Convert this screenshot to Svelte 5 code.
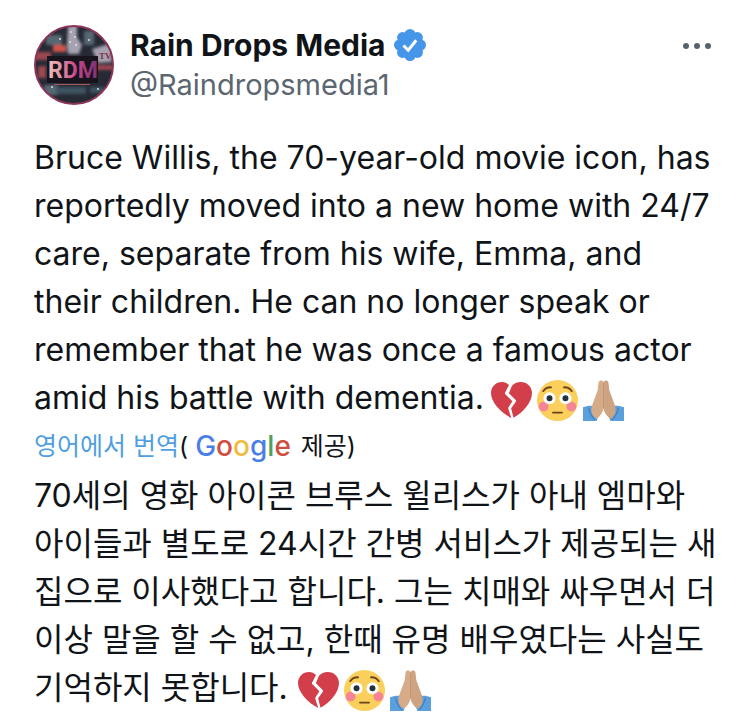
<script>
  const author = { name: 'Rain Drops Media', handle: '@Raindropsmedia1' };

  const original =
    'Bruce Willis, the 70-year-old movie icon, has reportedly moved into a new home with 24/7 care, separate from his wife, Emma, and their children. He can no longer speak or remember that he was once a famous actor amid his battle with dementia.';

  const translated =
    '70세의 영화 아이콘 브루스 윌리스가 아내 엠마와 아이들과 별도로 24시간 간병 서비스가 제공되는 새 집으로 이사했다고 합니다. 그는 치매와 싸우면서 더 이상 말을 할 수 없고, 한때 유명 배우였다는 사실도 기억하지 못합니다.';
</script>

{#snippet emojis()}
  <span class="emojis">
    <svg class="emoji" viewBox="0 0 36 36" role="img" aria-label="broken heart">
      <path
        fill="#d23f4b"
        d="M15.800 4.400C14 2.700 12 1.700 9.700 1.700 4.300 1.700 0 6 0 11.400c0 8.200 8.600 17.300 17.800 22l-2.600-8.200c-.1-.5 0-.9.2-1.300l3.400-5.200-6.200-6.200c-.4-.4-.5-1-.2-1.500z"
      />
      <path
        fill="#d23f4b"
        d="M18.300 5.200C20.100 3 23 1.700 26.100 1.700 31.600 1.700 36 6 36 11.400c0 8.200-7.600 17-16.200 21.800l-2-7.800c-.1-.4 0-.8.2-1.100l3.800-5.300c.3-.5.3-1.100-.1-1.500l-6-5.800z"
      />
    </svg>
    <svg class="emoji" viewBox="0 0 36 36" role="img" aria-label="flushed face">
      <circle cx="18" cy="18" r="18" fill="#fbcf5c" />
      <circle cx="5.800" cy="23.300" r="4.300" fill="#f58596" />
      <circle cx="30.200" cy="23.300" r="4.300" fill="#f58596" />
      <circle cx="11" cy="16" r="5.300" fill="#fff" />
      <circle cx="25" cy="16" r="5.300" fill="#fff" />
      <circle cx="11" cy="16" r="2.600" fill="#25303c" />
      <circle cx="25" cy="16" r="2.600" fill="#25303c" />
      <path
        fill="none"
        stroke="#69451c"
        stroke-width="1.600"
        stroke-linecap="round"
        d="M5.400 9.800C7 7.500 9.500 6.300 12.400 6.400M30.600 9.800C29 7.500 26.500 6.300 23.600 6.400M14 28.600h8"
      />
    </svg>
    <svg class="emoji" viewBox="0 0 36 36" role="img" aria-label="folded hands">
      <path
        fill="#5b9fdc"
        d="M0 24c3-1.400 6.500-1.800 8.500-1.200L13 33l-1 3H0zM36 24c-3-1.400-6.500-1.800-8.500-1.200L23 33l1 3h12z"
      />
      <path fill="none" stroke="#3f7fbd" d="M5 24.500c.5 3.500 2.500 7.500 5.500 10.500M31 24.500c-.5 3.500-2.500 7.500-5.500 10.500" />
      <path
        fill="#d5ab88"
        d="M17.900 2C17.500.2 14.300-.2 13.700 2L12.900 9 8.100 22c-.4 1-.6 2-.7 3l.1 3.500c1 2.800 2.700 4.800 4.700 5.500 2.600-2.400 4.900-4.800 5.700-8.300z"
      />
      <path
        fill="#cda381"
        d="M18.100 2c.4-1.800 3.600-2.200 4.200 0L23.100 9l4.800 13c.4 1 .6 2 .7 3l-.1 3.500c-1 2.800-2.700 4.800-4.700 5.500-2.600-2.400-4.900-4.800-5.700-8.300z"
      />
      <path fill="none" stroke="#b78a69" stroke-width=".7" d="M18 2v23" />
      <path fill="#fff" d="M18 26.500c.8 3.500 2.600 6 4.800 8V36h-9.600v-1.500c2.200-2 4-4.500 4.800-8z" />
    </svg>
  </span>
{/snippet}

<article class="post">
  <header class="head">
    <svg class="avatar" viewBox="0 0 80 80" role="img" aria-label={author.name}>
      <defs>
        <linearGradient id="rdm" x1="0" x2="1">
          <stop offset="0" stop-color="#f0c0b4" />
          <stop offset=".3" stop-color="#d98aa0" />
          <stop offset=".55" stop-color="#c9468c" />
          <stop offset="1" stop-color="#7d3072" />
        </linearGradient>
        <filter id="soft" x="-20%" y="-20%" width="140%" height="140%">
          <feGaussianBlur stdDeviation="1.500" />
        </filter>
        <clipPath id="disc"><circle cx="40" cy="40" r="39" /></clipPath>
      </defs>
      <g clip-path="url(#disc)">
        <path fill="#252a35" d="M0 0h80v80H0z" />
        <g filter="url(#soft)">
          <path fill="#596773" d="M12 10h16v10H12zM50 6h10v14H50zM10 60h14v10H10z" />
          <path fill="#9d4650" d="M0 27h17v8H0zM4 41h8v12H4zM62 40h18v5H62z" />
          <path fill="#d0524a" d="M19 20h13v7H19z" />
          <path fill="#a6a2b2" d="M34 0h9v12l5 8-3 9H34l-1-9zM58 24l20-6v19l-14 1z" />
          <path fill="#3e5260" d="M22 62h30v7H22zM56 62h14v6H56z" />
        </g>
        <g fill="#dfdde4">
          <circle cx="37" cy="7" r="1" />
          <circle cx="41" cy="12" r="1" />
          <circle cx="36" cy="17" r="1" />
          <circle cx="42" cy="20" r="1" />
          <circle cx="26" cy="14" r="1" />
          <circle cx="55" cy="15" r="1" />
          <circle cx="18" cy="62" r="1" />
          <circle cx="64" cy="64" r="1" />
        </g>
        <path fill="#17141d" d="M13 31h51v27H13z" />
        <path fill="#a55958" d="M20 59h36v1H20z" />
      </g>
      <circle cx="40" cy="40" r="39" fill="none" stroke="#8b3559" stroke-width="2" />
      <text class="logo" x="14" y="53" fill="url(#rdm)">RDM</text>
      <text class="logo-tv" x="65" y="34">TV</text>
    </svg>

    <div class="who">
      <div class="name-row">
        <span class="name">{author.name}</span>
        <svg class="verified" viewBox="0 0 32 32" role="img" aria-label="Verified account">
          <g fill="#4596e8">
            <circle cx="16" cy="16" r="12" />
            <circle cx="16" cy="5.500" r="5.500" />
            <circle cx="23.400" cy="8.600" r="5.500" />
            <circle cx="26.500" cy="16" r="5.500" />
            <circle cx="23.400" cy="23.400" r="5.500" />
            <circle cx="16" cy="26.500" r="5.500" />
            <circle cx="8.600" cy="23.400" r="5.500" />
            <circle cx="5.500" cy="16" r="5.500" />
            <circle cx="8.600" cy="8.600" r="5.500" />
          </g>
          <path fill="none" stroke="#fff" stroke-width="3" d="M9.500 16.500l4.700 4.700 8-10" />
        </svg>
      </div>
      <a class="handle" href="#profile">{author.handle}</a>
    </div>

    <button class="more" aria-label="More">
      <svg viewBox="0 0 28 8" aria-hidden="true">
        <circle cx="3" cy="4" r="3" />
        <circle cx="14" cy="4" r="3" />
        <circle cx="25" cy="4" r="3" />
      </svg>
    </button>
  </header>

  <p class="text">{original}{@render emojis()}</p>

  <div class="source">
    <a href="#translate">영어에서 번역</a><span>(</span>
    <span class="google"
      ><span class="blue">G</span><span class="red">o</span><span class="yellow">o</span><span class="blue">g</span><span
        class="green">l</span
      ><span class="red">e</span></span
    >
    <span>제공)</span>
  </div>

  <p class="text korean" lang="ko">{translated} {@render emojis()}</p>
</article>

<style>
  :global(body) {
    background: #fff;
  }

  .post {
    padding: 25px 34px 8px;
    color: #101418;
    font-family: Inter, 'Noto Sans CJK KR', sans-serif;
  }

  .head {
    display: flex;
    align-items: flex-start;
    margin-bottom: 29px;
  }

  .avatar {
    flex: none;
    width: 80px;
    height: 80px;
    margin-right: 16px;
  }

  .logo {
    font: 700 23px Roboto, sans-serif;
  }

  .logo-tv {
    fill: #7d3047;
    font: 700 9px 'Liberation Serif', serif;
  }

  .who {
    flex: 1;
    min-width: 0;
  }

  .name-row {
    display: flex;
    align-items: center;
    gap: 8px;
    height: 40px;
  }

  .name {
    font-size: 30px;
    font-weight: 700;
    line-height: 40px;
  }

  .verified {
    width: 32px;
    height: 32px;
  }

  .handle {
    display: block;
    color: #5b6670;
    font-size: 29px;
    line-height: 40px;
    text-decoration: none;
  }

  .more {
    display: flex;
    padding: 17px 5px;
    border: 0;
    background: none;
    cursor: pointer;
  }

  .more svg {
    width: 28px;
    height: 8px;
    fill: #56626e;
  }

  .text {
    margin: 0;
    font-size: 32px;
    line-height: 48px;
  }

  .korean {
    margin-right: -4px;
    word-break: keep-all;
  }

  .emojis {
    display: inline-flex;
    gap: 5px;
    margin-left: 7px;
    vertical-align: middle;
  }

  .korean .emojis {
    margin-left: 1px;
  }

  .emoji {
    width: 41px;
    height: 41px;
  }

  .source {
    display: flex;
    align-items: center;
    padding-bottom: 2px;
    font-size: 25px;
    line-height: 48px;
  }

  .source a {
    color: #4f9fe0;
    text-decoration: none;
  }

  .google {
    margin: 0 10px 0 7px;
    font-size: 28px;
    font-weight: 500;
  }

  .blue {
    color: #4c7fe6;
  }

  .red {
    color: #d04f43;
  }

  .yellow {
    color: #efbd3e;
  }

  .green {
    color: #4f9f5e;
  }
</style>
